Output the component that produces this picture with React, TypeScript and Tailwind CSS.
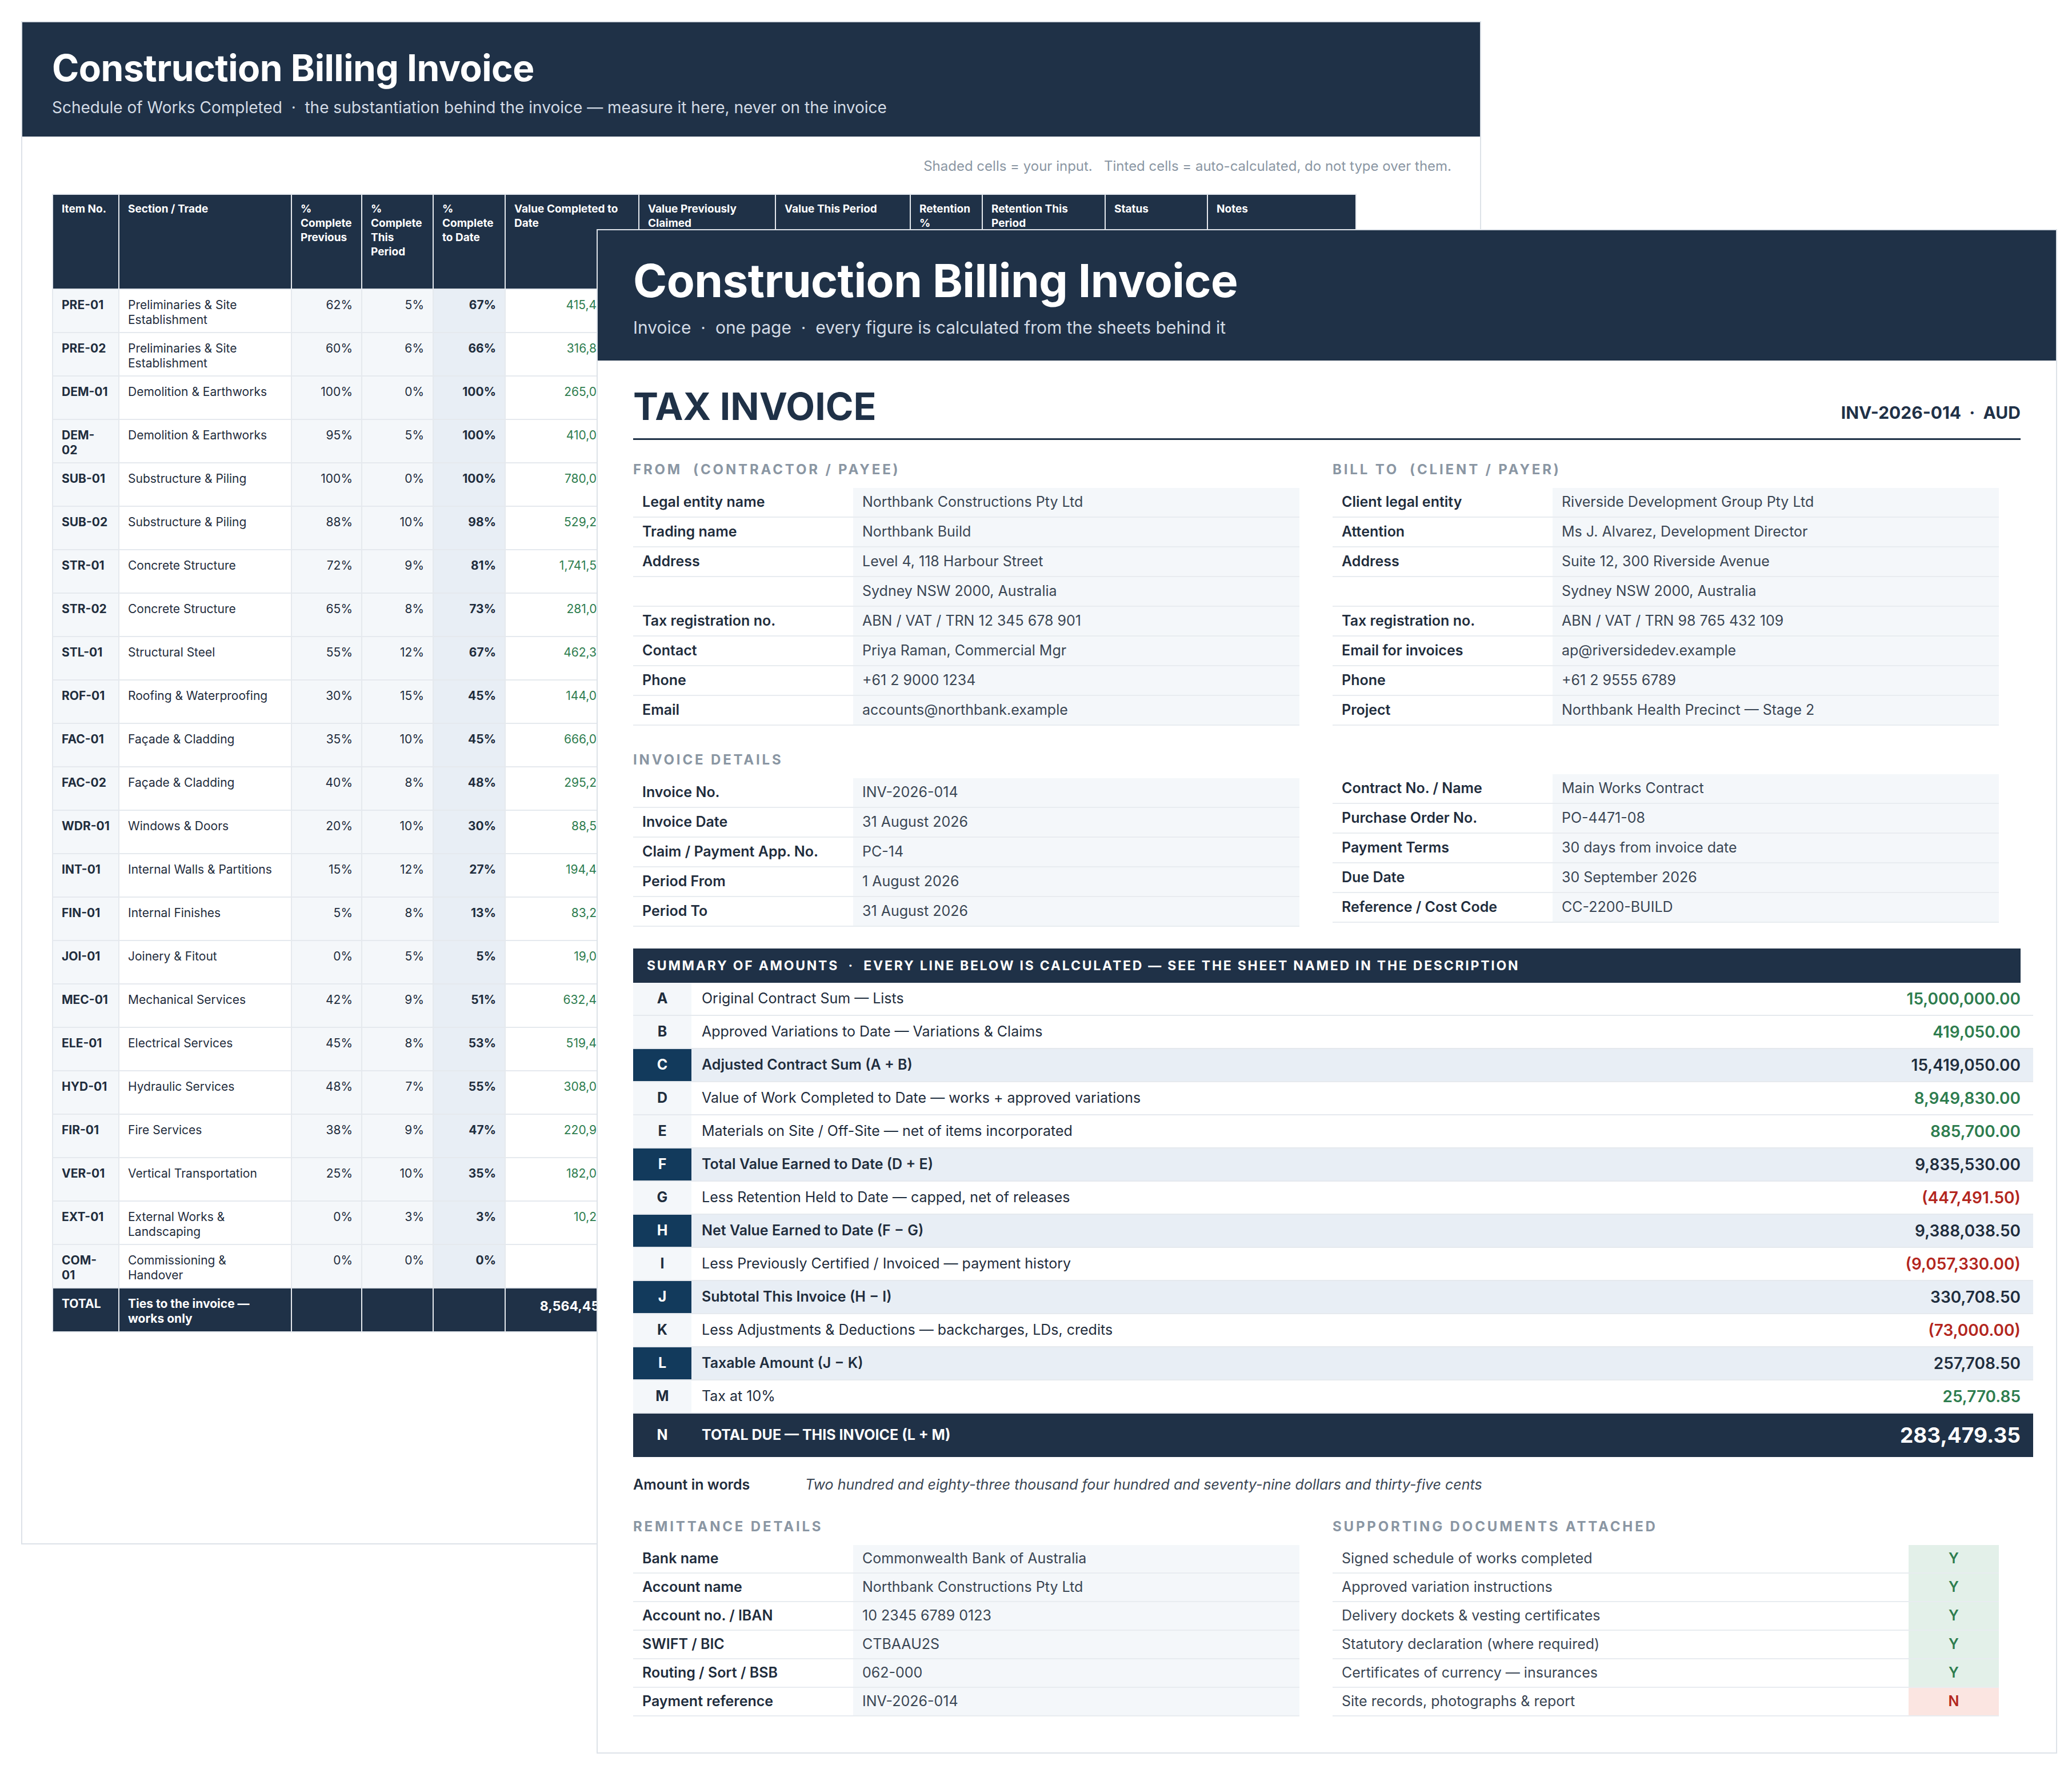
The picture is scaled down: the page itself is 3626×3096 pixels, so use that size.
import React from "react";

const NAVY = "bg-[#1f3147]";

const works: [string, string, number, number, number, string][] = [
  ["PRE-01", "Preliminaries & Site Establishment", 62, 5, 67, "415,400.00"],
  ["PRE-02", "Preliminaries & Site Establishment", 60, 6, 66, "316,800.00"],
  ["DEM-01", "Demolition & Earthworks", 100, 0, 100, "265,000.00"],
  ["DEM-02", "Demolition & Earthworks", 95, 5, 100, "410,000.00"],
  ["SUB-01", "Substructure & Piling", 100, 0, 100, "780,000.00"],
  ["SUB-02", "Substructure & Piling", 88, 10, 98, "529,200.00"],
  ["STR-01", "Concrete Structure", 72, 9, 81, "1,741,500.00"],
  ["STR-02", "Concrete Structure", 65, 8, 73, "281,050.00"],
  ["STL-01", "Structural Steel", 55, 12, 67, "462,300.00"],
  ["ROF-01", "Roofing & Waterproofing", 30, 15, 45, "144,000.00"],
  ["FAC-01", "Façade & Cladding", 35, 10, 45, "666,000.00"],
  ["FAC-02", "Façade & Cladding", 40, 8, 48, "295,200.00"],
  ["WDR-01", "Windows & Doors", 20, 10, 30, "88,500.00"],
  ["INT-01", "Internal Walls & Partitions", 15, 12, 27, "194,400.00"],
  ["FIN-01", "Internal Finishes", 5, 8, 13, "83,200.00"],
  ["JOI-01", "Joinery & Fitout", 0, 5, 5, "19,000.00"],
  ["MEC-01", "Mechanical Services", 42, 9, 51, "632,400.00"],
  ["ELE-01", "Electrical Services", 45, 8, 53, "519,400.00"],
  ["HYD-01", "Hydraulic Services", 48, 7, 55, "308,000.00"],
  ["FIR-01", "Fire Services", 38, 9, 47, "220,900.00"],
  ["VER-01", "Vertical Transportation", 25, 10, 35, "182,000.00"],
  ["EXT-01", "External Works & Landscaping", 0, 3, 3, "10,200.00"],
  ["COM-01", "Commissioning & Handover", 0, 0, 0, ""],
];

const heads = [
  "Item No.", "Section / Trade", "% Complete Previous", "% Complete This Period", "% Complete to Date",
  "Value Completed to Date", "Value Previously Claimed", "Value This Period", "Retention %",
  "Retention This Period", "Status", "Notes",
];
const widths = [116, 302, 123, 125, 126, 234, 239, 236, 126, 215, 179, 260];

function BackPanel() {
  return (
    <div className="absolute left-[37px] top-[37px] w-[2555px] h-[2666px] bg-white border-2 border-[#dde2e8]">
      <div className={`${NAVY} h-[200px] px-[52px] pt-[40px]`}>
        <div className="text-white font-bold text-[64px] leading-[80px] tracking-[-0.5px]">Construction Billing Invoice</div>
        <div className="text-[#d3dbe5] text-[28px] mt-[8px]">Schedule of Works Completed &nbsp;·&nbsp; the substantiation behind the invoice — measure it here, never on the invoice</div>
      </div>
      <div className="px-[52px]">
        <div className="text-right text-[24px] text-[#8a96a3] mt-[34px] mr-[-2px] pr-[0px]">Shaded cells = your input. &nbsp; Tinted cells = auto-calculated, do not type over them.</div>
        <table className="mt-[30px] border-collapse text-[21px] text-[#1f2d3d]" style={{ tableLayout: "fixed" }}>
          <colgroup>{widths.map((w, i) => <col key={i} style={{ width: w }} />)}</colgroup>
          <thead>
            <tr className={`${NAVY} text-white h-[166px]`}>
              {heads.map((h) => (
                <th key={h} className="align-top text-left font-bold text-[19px] leading-[25px] px-[15px] pt-[12px] border-2 border-[#e5e9ee]">{h}</th>
              ))}
            </tr>
          </thead>
          <tbody>
            {works.map((r) => (
              <tr key={r[0]} className="h-[76px] align-top">
                <td className="bg-[#f4f7fa] font-bold px-[15px] pt-[14px] leading-[26px] border-2 border-[#e5e9ee]">{r[0]}</td>
                <td className="bg-white px-[15px] pt-[14px] leading-[26px] border-2 border-[#e5e9ee]">{r[1]}</td>
                <td className="bg-[#f4f7fa] text-right px-[15px] pt-[14px] leading-[26px] border-2 border-[#e5e9ee]">{r[2]}%</td>
                <td className="bg-[#f4f7fa] text-right px-[15px] pt-[14px] leading-[26px] border-2 border-[#e5e9ee]">{r[3]}%</td>
                <td className="bg-[#e8eef5] text-right font-bold px-[15px] pt-[14px] leading-[26px] border-2 border-[#e5e9ee]">{r[4]}%</td>
                <td className="bg-white text-right text-[#2e7d4f] px-[15px] pt-[14px] leading-[26px] border-2 border-[#e5e9ee]">{r[5]}</td>
                {[0, 1, 2, 3, 4, 5].map((i) => <td key={i} className="bg-white border-2 border-[#e5e9ee]"></td>)}
              </tr>
            ))}
            <tr className={`${NAVY} text-white font-bold h-[77px] align-top`}>
              <td className="px-[15px] pt-[14px] leading-[26px] border-2 border-[#e5e9ee]">TOTAL</td>
              <td className="px-[15px] pt-[14px] leading-[26px] border-2 border-[#e5e9ee]">Ties to the invoice — works only</td>
              <td className="border-2 border-[#e5e9ee]"></td>
              <td className="border-2 border-[#e5e9ee]"></td>
              <td className="border-2 border-[#e5e9ee]"></td>
              <td className="text-right px-[15px] pt-[14px] text-[23px] border-2 border-[#e5e9ee]">8,564,450.00</td>
              {[0, 1, 2, 3, 4, 5].map((i) => <td key={i} className="border-2 border-[#e5e9ee]"></td>)}
            </tr>
          </tbody>
        </table>
      </div>
    </div>
  );
}

function KV({ rows }: { rows: [string, string][] }) {
  return (
    <div>
      {rows.map(([k, v], i) => (
        <div key={i} className="flex h-[52px] border-b-2 border-[#e8ecf0] text-[25px]">
          <div className="w-[385px] pl-[16px] flex items-center font-semibold text-[#1f2d3d]">{k}</div>
          <div className="flex-1 bg-[#f4f7fa] pl-[16px] flex items-center text-[#3a4654]">{v}</div>
        </div>
      ))}
    </div>
  );
}

function Heading({ children, className = "" }: { children: React.ReactNode; className?: string }) {
  return <div className={`text-[24px] font-bold tracking-[0.16em] text-[#8a96a3] uppercase ${className}`}>{children}</div>;
}

const summary: [string, string, string, "g" | "r" | "d", boolean][] = [
  ["A", "Original Contract Sum — Lists", "15,000,000.00", "g", false],
  ["B", "Approved Variations to Date — Variations & Claims", "419,050.00", "g", false],
  ["C", "Adjusted Contract Sum (A + B)", "15,419,050.00", "d", true],
  ["D", "Value of Work Completed to Date — works + approved variations", "8,949,830.00", "g", false],
  ["E", "Materials on Site / Off-Site — net of items incorporated", "885,700.00", "g", false],
  ["F", "Total Value Earned to Date (D + E)", "9,835,530.00", "d", true],
  ["G", "Less Retention Held to Date — capped, net of releases", "(447,491.50)", "r", false],
  ["H", "Net Value Earned to Date (F − G)", "9,388,038.50", "d", true],
  ["I", "Less Previously Certified / Invoiced — payment history", "(9,057,330.00)", "r", false],
  ["J", "Subtotal This Invoice (H − I)", "330,708.50", "d", true],
  ["K", "Less Adjustments & Deductions — backcharges, LDs, credits", "(73,000.00)", "r", false],
  ["L", "Taxable Amount (J − K)", "257,708.50", "d", true],
  ["M", "Tax at 10%", "25,770.85", "g", false],
];

const docs: [string, boolean][] = [
  ["Signed schedule of works completed", true],
  ["Approved variation instructions", true],
  ["Delivery dockets & vesting certificates", true],
  ["Statutory declaration (where required)", true],
  ["Certificates of currency — insurances", true],
  ["Site records, photographs & report", false],
];

function FrontPanel() {
  return (
    <div className="absolute left-[1044px] top-[401px] w-[2556px] h-[2668px] bg-white border-2 border-[#dde2e8]">
      <div className={`${NAVY} h-[228px] px-[62px] pt-[38px]`}>
        <div className="text-white font-bold text-[80px] leading-[100px] tracking-[-0.5px]">Construction Billing Invoice</div>
        <div className="text-[#d3dbe5] text-[30px] mt-[10px]">Invoice &nbsp;·&nbsp; one page &nbsp;·&nbsp; every figure is calculated from the sheets behind it</div>
      </div>
      <div className="pl-[62px] pr-[40px]">
        <div className="flex items-end justify-between border-b-[3px] border-[#1f3147] pb-[16px] pt-[40px] mr-[22px]">
          <div className="text-[66px] font-bold text-[#1f3147] leading-[80px]">TAX INVOICE</div>
          <div className="text-[30px] font-bold text-[#1f3147] pb-[6px]">INV-2026-014 &nbsp;·&nbsp; AUD</div>
        </div>
        <div className="grid grid-cols-2 gap-x-[58px] mr-[60px] mt-[34px]">
          <div>
            <Heading className="mb-[14px]">From &nbsp;(Contractor / Payee)</Heading>
            <KV rows={[
              ["Legal entity name", "Northbank Constructions Pty Ltd"],
              ["Trading name", "Northbank Build"],
              ["Address", "Level 4, 118 Harbour Street"],
              ["", "Sydney NSW 2000, Australia"],
              ["Tax registration no.", "ABN / VAT / TRN 12 345 678 901"],
              ["Contact", "Priya Raman, Commercial Mgr"],
              ["Phone", "+61 2 9000 1234"],
              ["Email", "accounts@northbank.example"],
            ]} />
            <Heading className="mt-[42px] mb-[14px]">Invoice Details</Heading>
            <KV rows={[
              ["Invoice No.", "INV-2026-014"],
              ["Invoice Date", "31 August 2026"],
              ["Claim / Payment App. No.", "PC-14"],
              ["Period From", "1 August 2026"],
              ["Period To", "31 August 2026"],
            ]} />
          </div>
          <div>
            <Heading className="mb-[14px]">Bill To &nbsp;(Client / Payer)</Heading>
            <KV rows={[
              ["Client legal entity", "Riverside Development Group Pty Ltd"],
              ["Attention", "Ms J. Alvarez, Development Director"],
              ["Address", "Suite 12, 300 Riverside Avenue"],
              ["", "Sydney NSW 2000, Australia"],
              ["Tax registration no.", "ABN / VAT / TRN 98 765 432 109"],
              ["Email for invoices", "ap@riversidedev.example"],
              ["Phone", "+61 2 9555 6789"],
              ["Project", "Northbank Health Precinct — Stage 2"],
            ]} />
            <div className="h-[42px]" />
            <div className="h-[29px] mb-[14px]" />
            <KV rows={[
              ["Contract No. / Name", "Main Works Contract"],
              ["Purchase Order No.", "PO-4471-08"],
              ["Payment Terms", "30 days from invoice date"],
              ["Due Date", "30 September 2026"],
              ["Reference / Cost Code", "CC-2200-BUILD"],
            ]} />
          </div>
        </div>

        <div className="mt-[38px]">
          <div className={`${NAVY} h-[60px] flex items-center px-[24px] text-white text-[23px] font-bold tracking-[0.12em] uppercase mr-[22px]`}>
            Summary of Amounts &nbsp;·&nbsp; every line below is calculated — see the sheet named in the description
          </div>
          {summary.map(([l, d, a, c, b]) => (
            <div key={l} className={`flex h-[58px] border-b-2 border-[#e5e9ee] text-[25px] ${b ? "bg-[#e8eef5]" : "bg-white"}`}>
              <div className={`w-[102px] flex items-center justify-center font-bold ${b ? "bg-[#123a5c] text-white" : "bg-[#f4f7fa] text-[#1f2d3d]"}`}>{l}</div>
              <div className={`flex-1 flex items-center pl-[18px] text-[#1f2d3d] ${b ? "font-semibold" : ""}`}>{d}</div>
              <div className={`flex items-center pr-[22px] text-[28px] font-semibold ${c === "g" ? "text-[#2e7d4f]" : c === "r" ? "text-[#b3261e]" : "text-[#1f2d3d]"}`}>{a}</div>
            </div>
          ))}
          <div className={`${NAVY} h-[76px] flex items-center text-white`}>
            <div className="w-[102px] flex justify-center text-[25px] font-bold">N</div>
            <div className="flex-1 pl-[18px] text-[25px] font-bold">TOTAL DUE — THIS INVOICE (L + M)</div>
            <div className="pr-[22px] text-[37px] font-bold">283,479.35</div>
          </div>
        </div>

        <div className="flex items-center mt-[30px] text-[25px] mr-[22px]">
          <div className="w-[301px] font-semibold text-[#1f2d3d]">Amount in words</div>
          <div className="italic text-[#3a4654]">Two hundred and eighty-three thousand four hundred and seventy-nine dollars and thirty-five cents</div>
        </div>

        <div className="grid grid-cols-2 gap-x-[58px] mr-[60px] mt-[36px]">
          <div>
            <Heading className="mb-[14px]">Remittance Details</Heading>
            {([
              ["Bank name", "Commonwealth Bank of Australia"],
              ["Account name", "Northbank Constructions Pty Ltd"],
              ["Account no. / IBAN", "10 2345 6789 0123"],
              ["SWIFT / BIC", "CTBAAU2S"],
              ["Routing / Sort / BSB", "062-000"],
              ["Payment reference", "INV-2026-014"],
            ] as [string, string][]).map(([k, v]) => (
              <div key={k} className="flex h-[50px] border-b-2 border-[#e8ecf0] text-[25px]">
                <div className="w-[385px] pl-[16px] flex items-center font-semibold text-[#1f2d3d]">{k}</div>
                <div className="flex-1 bg-[#f4f7fa] pl-[16px] flex items-center text-[#3a4654]">{v}</div>
              </div>
            ))}
          </div>
          <div>
            <Heading className="mb-[14px]">Supporting Documents Attached</Heading>
            {docs.map(([d, y]) => (
              <div key={d} className="flex h-[50px] border-b-2 border-[#e8ecf0] text-[25px]">
                <div className="flex-1 pl-[16px] flex items-center text-[#3a4654]">{d}</div>
                <div className={`w-[158px] flex items-center justify-center font-semibold ${y ? "bg-[#e3f0e9] text-[#2e7d4f]" : "bg-[#fbe5e1] text-[#b3261e]"}`}>{y ? "Y" : "N"}</div>
              </div>
            ))}
          </div>
        </div>
      </div>
    </div>
  );
}

export default function App() {
  return (
    <div className="relative w-[3626px] h-[3096px] bg-white" style={{ fontFamily: "Inter, 'Noto Sans', sans-serif" }}>
      <BackPanel />
      <FrontPanel />
    </div>
  );
}
